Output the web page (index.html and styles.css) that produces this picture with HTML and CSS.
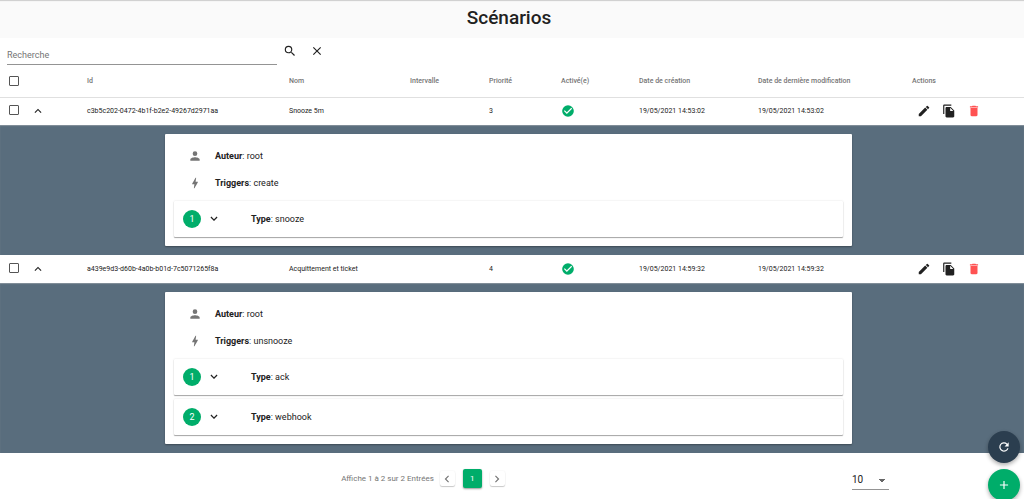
FILE: index.html
```
<!DOCTYPE html>
<html lang="fr">
<head>
<meta charset="utf-8">
<title>Scénarios</title>
<link rel="stylesheet" href="styles.css">
</head>
<body>
<svg class="sprite" aria-hidden="true">
  <symbol id="search" viewBox="0 0 24 24"><path d="M15.5 14h-.79l-.28-.27A6.47 6.47 0 0 0 16 9.5 6.5 6.5 0 1 0 9.5 16c1.61 0 3.09-.59 4.23-1.57l.27.28v.79l5 4.99L20.49 19l-4.99-5zm-6 0a4.5 4.5 0 1 1 0-9 4.5 4.5 0 0 1 0 9z"/></symbol>
  <symbol id="close" viewBox="0 0 24 24"><path d="M19 6.41 17.59 5 12 10.59 6.41 5 5 6.41 10.59 12 5 17.59 6.41 19 12 13.41 17.59 19 19 17.59 13.41 12z"/></symbol>
  <symbol id="up" viewBox="0 0 24 24"><path d="M7.41 15.41 12 10.83l4.59 4.58L18 14l-6-6-6 6z"/></symbol>
  <symbol id="down" viewBox="0 0 24 24"><path d="M7.41 7.84 12 12.42l4.59-4.58L18 9.25l-6 6-6-6z"/></symbol>
  <symbol id="left" viewBox="0 0 24 24"><path d="M15.41 7.41 14 6l-6 6 6 6 1.41-1.41L10.83 12z"/></symbol>
  <symbol id="right" viewBox="0 0 24 24"><path d="M10 6 8.59 7.41 13.17 12l-4.58 4.59L10 18l6-6z"/></symbol>
  <symbol id="check" viewBox="0 0 24 24"><path d="M12 2a10 10 0 1 0 0 20 10 10 0 0 0 0-20zm-2 15-5-5 1.41-1.41L10 14.17l7.59-7.59L19 8l-9 9z"/></symbol>
  <symbol id="edit" viewBox="0 0 24 24"><path d="M3 17.25V21h3.75L17.81 9.94l-3.75-3.75L3 17.25zM20.71 7.04a1 1 0 0 0 0-1.41l-2.34-2.34a1 1 0 0 0-1.41 0l-1.83 1.83 3.75 3.75 1.83-1.83z"/></symbol>
  <symbol id="copy" viewBox="0 0 24 24"><path d="M16 1H4c-1.1 0-2 .9-2 2v14h2V3h12V1zm-1 4 6 6v10c0 1.1-.9 2-2 2H7.99C6.89 23 6 22.1 6 21l.01-14c0-1.100.89-2 1.990-2h7zm-1 7h5.5L14 6.500V12z"/></symbol>
  <symbol id="delete" viewBox="0 0 24 24"><path d="M6 19c0 1.1.9 2 2 2h8c1.100 0 2-.9 2-2V7H6v12zM19 4h-3.500l-1-1h-5l-1 1H5v2h14V4z"/></symbol>
  <symbol id="person" viewBox="0 0 24 24"><path d="M12 12a4 4 0 1 0 0-8 4 4 0 0 0 0 8zm0 2c-2.670 0-8 1.340-8 4v2h16v-2c0-2.660-5.330-4-8-4z"/></symbol>
  <symbol id="bolt" viewBox="0 0 24 24"><path d="M11 21h-1l1-7H7.500c-.88 0-.33-.75-.31-.78C8.480 10.940 10.420 7.540 13.010 3h1l-1 7h3.510c.4 0 .62.19.4.66C12.970 17.550 11 21 11 21z"/></symbol>
  <symbol id="refresh" viewBox="0 0 24 24"><path d="M17.650 6.350A8 8 0 1 0 19.730 14h-2.080A6 6 0 1 1 12 6c1.660 0 3.140.69 4.220 1.780L13 11h7V4l-2.350 2.350z"/></symbol>
  <symbol id="add" viewBox="0 0 24 24"><path d="M19 13h-6v6h-2v-6H5v-2h6V5h2v6h6z"/></symbol>
</svg>

<header class="page-header"><h1 class="page-title">Scénarios</h1></header>

<main>
  <form class="search">
    <input class="search-field" type="text" placeholder="Recherche" aria-label="Recherche">
    <button class="icon-button" type="button" aria-label="Rechercher"><svg class="icon"><use href="#search"/></svg></button>
    <button class="icon-button" type="button" aria-label="Effacer"><svg class="icon"><use href="#close"/></svg></button>
  </form>

  <table class="scenarios">
    <colgroup>
      <col class="col-check"><col class="col-expand"><col class="col-id"><col class="col-name"><col class="col-interval"><col class="col-priority"><col class="col-enabled"><col class="col-created"><col class="col-updated"><col class="col-actions">
    </colgroup>
    <thead>
      <tr class="head-row">
        <th class="check-cell"><input class="checkbox" type="checkbox" aria-label="Tout sélectionner"></th>
        <th></th><th>Id</th><th>Nom</th><th>Intervalle</th><th>Priorité</th><th>Activé(e)</th><th>Date de création</th><th>Date de dernière modification</th><th>Actions</th>
      </tr>
    </thead>
    <tbody>
      <tr class="row">
        <td class="check-cell"><input class="checkbox" type="checkbox" aria-label="Sélectionner Snooze 5m"></td>
        <td><button class="expand" type="button" aria-label="Réduire" aria-expanded="true"><svg class="icon"><use href="#up"/></svg></button></td>
        <td>c3b5c202-0472-4b1f-b2e2-49267d2971aa</td><td>Snooze 5m</td><td></td><td>3</td>
        <td><svg class="icon enabled" role="img" aria-label="Activé"><use href="#check"/></svg></td>
        <td>19/05/2021 14:53:02</td><td>19/05/2021 14:53:02</td>
        <td><div class="actions">
          <button class="icon-button" type="button" aria-label="Modifier"><svg class="icon"><use href="#edit"/></svg></button>
          <button class="icon-button" type="button" aria-label="Dupliquer"><svg class="icon"><use href="#copy"/></svg></button>
          <button class="icon-button danger" type="button" aria-label="Supprimer"><svg class="icon"><use href="#delete"/></svg></button>
        </div></td>
      </tr>
      <tr>
        <td class="detail-cell" colspan="10"><div class="detail">
          <section class="card">
            <div class="info"><svg class="icon muted"><use href="#person"/></svg><span><b>Auteur</b>: root</span></div>
            <div class="info"><svg class="icon muted"><use href="#bolt"/></svg><span><b>Triggers</b>: create</span></div>
            <div class="steps">
              <div class="step"><span class="number">1</span><button class="expand" type="button" aria-label="Déplier"><svg class="icon"><use href="#down"/></svg></button><span class="step-type"><b>Type</b>: snooze</span></div>
            </div>
          </section>
        </div></td>
      </tr>
      <tr class="row">
        <td class="check-cell"><input class="checkbox" type="checkbox" aria-label="Sélectionner Acquittement et ticket"></td>
        <td><button class="expand" type="button" aria-label="Réduire" aria-expanded="true"><svg class="icon"><use href="#up"/></svg></button></td>
        <td>a439e9d3-d60b-4a0b-b01d-7c5071265f8a</td><td>Acquittement et ticket</td><td></td><td>4</td>
        <td><svg class="icon enabled" role="img" aria-label="Activé"><use href="#check"/></svg></td>
        <td>19/05/2021 14:59:32</td><td>19/05/2021 14:59:32</td>
        <td><div class="actions">
          <button class="icon-button" type="button" aria-label="Modifier"><svg class="icon"><use href="#edit"/></svg></button>
          <button class="icon-button" type="button" aria-label="Dupliquer"><svg class="icon"><use href="#copy"/></svg></button>
          <button class="icon-button danger" type="button" aria-label="Supprimer"><svg class="icon"><use href="#delete"/></svg></button>
        </div></td>
      </tr>
      <tr>
        <td class="detail-cell" colspan="10"><div class="detail">
          <section class="card">
            <div class="info"><svg class="icon muted"><use href="#person"/></svg><span><b>Auteur</b>: root</span></div>
            <div class="info"><svg class="icon muted"><use href="#bolt"/></svg><span><b>Triggers</b>: unsnooze</span></div>
            <div class="steps">
              <div class="step"><span class="number">1</span><button class="expand" type="button" aria-label="Déplier"><svg class="icon"><use href="#down"/></svg></button><span class="step-type"><b>Type</b>: ack</span></div>
              <div class="step"><span class="number">2</span><button class="expand" type="button" aria-label="Déplier"><svg class="icon"><use href="#down"/></svg></button><span class="step-type"><b>Type</b>: webhook</span></div>
            </div>
          </section>
        </div></td>
      </tr>
    </tbody>
  </table>

  <footer class="footer">
    <nav class="pagination" aria-label="Pagination">
      <span class="summary">Affiche 1 à 2 sur 2 Entrées</span>
      <button class="page-step" type="button" aria-label="Page précédente"><svg class="icon"><use href="#left"/></svg></button>
      <button class="page-current" type="button" aria-current="page">1</button>
      <button class="page-step" type="button" aria-label="Page suivante"><svg class="icon"><use href="#right"/></svg></button>
    </nav>
    <div class="page-size">
      <select class="size-select" aria-label="Éléments par page"><option>10</option><option>20</option></select>
    </div>
  </footer>
</main>

<div class="floating">
  <button class="fab fab-dark" type="button" aria-label="Actualiser"><svg class="icon"><use href="#refresh"/></svg></button>
  <button class="fab fab-green" type="button" aria-label="Ajouter"><svg class="icon"><use href="#add"/></svg></button>
</div>
</body>
</html>
```
FILE: styles.css
```
* { box-sizing: border-box; }

html { overflow: hidden; }

body {
  margin: 0;
  background: #fff;
  color: #212121;
  font: 9px/16px Roboto, sans-serif;
}

button, input, select { font: inherit; color: inherit; }

button {
  display: flex;
  align-items: center;
  justify-content: center;
  padding: 0;
  border: 0;
  background: none;
}

b { font-weight: 700; }

.sprite { display: none; }

.icon {
  display: block;
  flex: none;
  width: 14px;
  height: 14px;
  fill: currentColor;
}

.page-header {
  padding: 6px 0 8px;
  background: #fafafa;
  box-shadow: inset 0 2px 1px -1px #ccc;
}

.page-title {
  margin: 0;
  padding-right: 6px;
  font-size: 19px;
  line-height: 24px;
  font-weight: 500;
  text-align: center;
}

.search {
  display: flex;
  align-items: flex-start;
  gap: 13px;
  padding: 6px 7px 0;
}

.search-field {
  flex: none;
  width: 26.7%;
  height: 21px;
  margin-right: -7px;
  padding: 2px 0 0;
  border: 0;
  border-bottom: 1px solid #949494;
  outline: 0;
  background: none;
}

.search-field::placeholder { color: #757575; opacity: 1; }

.icon-button { width: 14px; height: 14px; }

.scenarios {
  width: 100%;
  border-collapse: collapse;
  table-layout: fixed;
}

.col-check { width: 28px; }
.col-expand { width: 59px; }
.col-id { width: 202px; }
.col-name { width: 121px; }
.col-interval { width: 79px; }
.col-priority { width: 72px; }
.col-enabled { width: 78px; }
.col-created { width: 119px; }
.col-updated { width: 154px; }
.col-actions { width: 112px; }

th, td {
  padding: 0;
  text-align: left;
  white-space: nowrap;
}

.head-row { height: 32px; border-bottom: 1px solid #e0e0e0; }

th {
  color: #757575;
  font-size: 7px;
  font-weight: 500;
}

.row { height: 28px; font-size: 7px; }

.check-cell { padding-left: 9px; }

.row .check-cell { padding-bottom: 2px; }

.checkbox {
  appearance: none;
  display: block;
  width: 10px;
  height: 10px;
  margin: 0;
  border: 1px solid #555;
  border-radius: 1px;
}

.expand { width: 14px; height: 14px; }

.row .expand { margin-left: 3px; }

.enabled { color: #00ad6a; }

.actions {
  display: flex;
  gap: 11px;
  padding-left: 5px;
}

.danger { color: #ff5252; }

.detail-cell { background: #596d7d; }

.detail {
  display: grid;
  grid-template-columns: 165fr 687fr 172fr;
  padding: 9px 0;
  box-shadow: inset 0 1px 1px #84919c;
}

.card {
  grid-column: 2;
  padding: 8px 9px 9px;
  border-radius: 1px;
  background: #fff;
  box-shadow: 0 1px 2px #0005;
}

.info {
  display: flex;
  align-items: center;
  gap: 13px;
  height: 27px;
  padding-left: 14px;
}

.muted { color: #757575; }

.steps {
  display: grid;
  gap: 4px;
  padding-top: 5px;
}

.step {
  display: flex;
  align-items: center;
  height: 36px;
  padding-left: 9px;
  border-radius: 1px;
  box-shadow: 0 1px 1px #0005, 0 0 2px #0002;
}

.number {
  width: 18px;
  margin-right: 6px;
  border-radius: 50%;
  background: #00ad6a;
  color: #fff;
  line-height: 18px;
  text-align: center;
}

.step-type { margin-left: 30px; }

.footer {
  display: grid;
  grid-template-columns: 1fr 172px;
  align-items: center;
  height: 51px;
}

.pagination {
  display: flex;
  align-items: center;
  justify-content: center;
  gap: 8px;
  padding-right: 6px;
  color: #757575;
  font-size: 8px;
}

.summary { margin-right: -2px; }

.page-step {
  width: 15px;
  height: 15px;
  border-radius: 2px;
  box-shadow: 0 1px 1px #0003, 0 0 2px #0001;
}

.page-current {
  width: 19px;
  height: 19px;
  border-radius: 2px;
  background: #00ad6a;
  color: #fff;
  box-shadow: 0 1px 2px #0006;
}

.page-size { padding-top: 3px; }

.size-select {
  appearance: none;
  display: block;
  width: 37px;
  height: 20px;
  padding: 0;
  border: 0;
  border-bottom: 1px solid #949494;
  outline: 0;
  font-size: 10px;
  background: conic-gradient(from -45deg at 50% 100%, #666 90deg, transparent 0) 27px 9px / 6px 3px no-repeat;
}

.floating {
  position: fixed;
  right: 4px;
  bottom: -2px;
  display: grid;
  gap: 6px;
}

.fab {
  width: 32px;
  height: 32px;
  border-radius: 50%;
  color: #fff;
  box-shadow: 0 2px 4px #0005;
}

.fab-dark { background: #2b3e4f; }
.fab-green { background: #00ad6a; }
```
